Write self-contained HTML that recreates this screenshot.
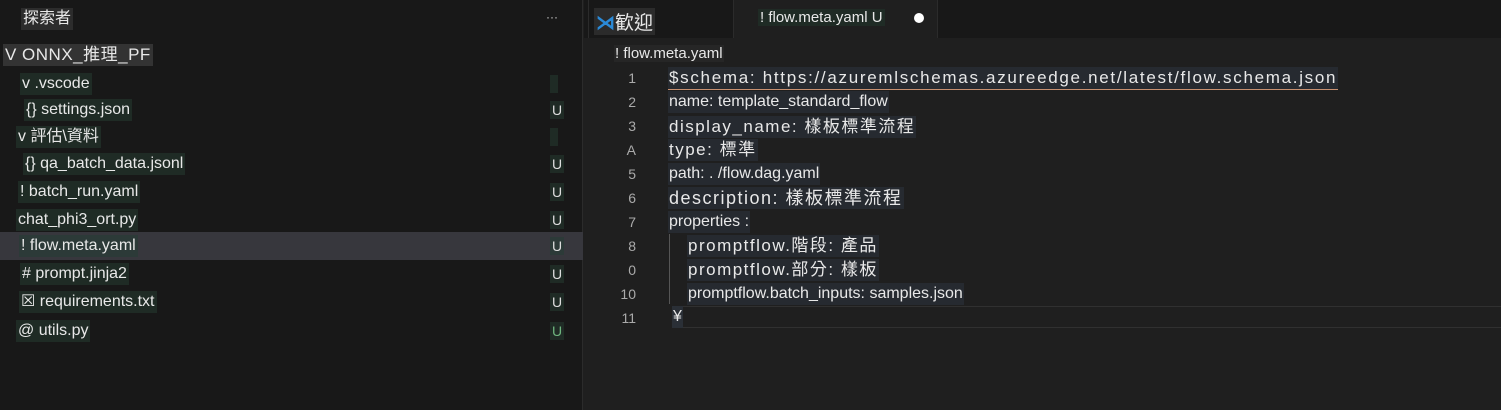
<!DOCTYPE html>
<html><head><meta charset="utf-8"><style>
*{margin:0;padding:0;box-sizing:border-box}
body{width:1501px;height:410px;background:#1f1f1f;font-family:"Liberation Sans","Noto Sans CJK TC",sans-serif;color:#e8e8e8;position:relative;overflow:hidden}
#side{position:absolute;left:0;top:0;width:583px;height:410px;background:#181818;border-right:1px solid #2b2b2b}
.t{position:absolute;white-space:nowrap;font-size:16px;line-height:22px;background:#1f2b25;padding:0 2px}
.u{position:absolute;left:550px;font-size:14px;color:#ddd;background:#1f2b25;padding:0 2px;line-height:18px}
#sel{position:absolute;left:0;top:232px;width:583px;height:28px;background:#37373d}
#tabs{position:absolute;left:584px;top:0;width:917px;height:38px;background:#181818}
.ln{position:absolute;width:30px;text-align:right;left:606px;font-size:14px;color:#aaa}
.c{position:absolute;left:668px;white-space:nowrap;font-size:16px;line-height:22px;background:#262a30;padding:0 1px}
.w{letter-spacing:1.5px;font-size:17px}
</style></head><body>
<div id="side">
<div id="sel"></div>
<div class="t" style="left:21px;top:8px;background:#2c2c2c">探索者</div>
<div style="position:absolute;left:546px;top:10px;font-size:12px;color:#ccc">···</div>
<div class="t" style="left:3px;top:44px;background:#333;font-size:17px;letter-spacing:0.5px">V ONNX_推理_PF</div>
<div class="t" style="left:20px;top:73px">v .vscode</div><div class="u" style="top:75px">&nbsp;</div>
<div class="t" style="left:24px;top:99px">{} settings.json</div><div class="u" style="top:101px">U</div>
<div class="t" style="left:16px;top:126px">v 評估\資料</div><div class="u" style="top:128px">&nbsp;</div>
<div class="t" style="left:23px;top:153px">{} qa_batch_data.jsonl</div><div class="u" style="top:155px">U</div>
<div class="t" style="left:18px;top:181px">! batch_run.yaml</div><div class="u" style="top:183px">U</div>
<div class="t" style="left:16px;top:209px">chat_phi3_ort.py</div><div class="u" style="top:211px">U</div>
<div class="t" style="left:19px;top:235px;background:#2c3a38">! flow.meta.yaml</div><div class="u" style="top:237px;background:#2c3a38">U</div>
<div class="t" style="left:20px;top:263px">#&nbsp;prompt.jinja2</div><div class="u" style="top:265px">U</div>
<div class="t" style="left:19px;top:291px">☒ requirements.txt</div><div class="u" style="top:293px">U</div>
<div class="t" style="left:16px;top:320px">@ utils.py</div><div class="u" style="top:322px;color:#6fb57f">U</div>
</div>
<div id="tabs">
<div style="position:absolute;left:4px;top:0;width:146px;height:38px;border-right:1px solid #2b2b2b;border-left:1px solid #2b2b2b"></div>
<div style="position:absolute;left:10px;top:8px;font-size:19px;background:#2b2b2b;padding:0 2px"><span style="color:#2a8ad8;font-weight:bold">⋊</span>歓迎</div>
<div style="position:absolute;left:150px;top:0;width:204px;height:38px;background:#1f1f1f;border-right:1px solid #2b2b2b"></div>
<div style="position:absolute;left:174px;top:9px;font-size:15px;background:#1f2b25;padding:0 2px">! flow.meta.yaml U</div>
<div style="position:absolute;left:330px;top:13px;width:10px;height:10px;border-radius:50%;background:#fff"></div>
</div>
<div style="position:absolute;left:614px;top:45px;font-size:15px;background:#262626;padding:0 1px">! flow.meta.yaml</div>
<div class="ln" style="top:70px">1</div><div class="c w" style="top:67px;border-bottom:1px solid #c89070;letter-spacing:1.7px">$schema: https://azuremlschemas.azureedge.net/latest/flow.schema.json</div>
<div class="ln" style="top:94px">2</div><div class="c" style="top:91px">name: template_standard_flow</div>
<div class="ln" style="top:118px">3</div><div class="c w" style="top:116px">display_name: 樣板標準流程</div>
<div class="ln" style="top:142px">A</div><div class="c w" style="top:139px">type: 標準</div>
<div class="ln" style="top:166px">5</div><div class="c" style="top:163px">path: . /flow.dag.yaml</div>
<div class="ln" style="top:190px">6</div><div class="c w" style="top:187px;font-size:18px">description: 樣板標準流程</div>
<div class="ln" style="top:214px">7</div><div class="c" style="top:211px">properties :</div>
<div style="position:absolute;left:669px;top:234px;width:1px;height:70px;background:#555"></div>
<div class="ln" style="top:238px">8</div><div class="c w" style="left:687px;top:235px">promptflow.階段: 產品</div>
<div class="ln" style="top:262px">0</div><div class="c w" style="left:687px;top:259px">promptflow.部分: 樣板</div>
<div class="ln" style="top:286px">10</div><div class="c" style="left:687px;top:283px">promptflow.batch_inputs: samples.json</div>
<div style="position:absolute;left:672px;top:306px;width:829px;height:22px;border:1px solid #303030;border-right:none"></div>
<div class="ln" style="top:310px;left:606px">11</div><div class="c" style="left:672px;top:306px;background:#2a2f36">¥</div>
</body></html>
